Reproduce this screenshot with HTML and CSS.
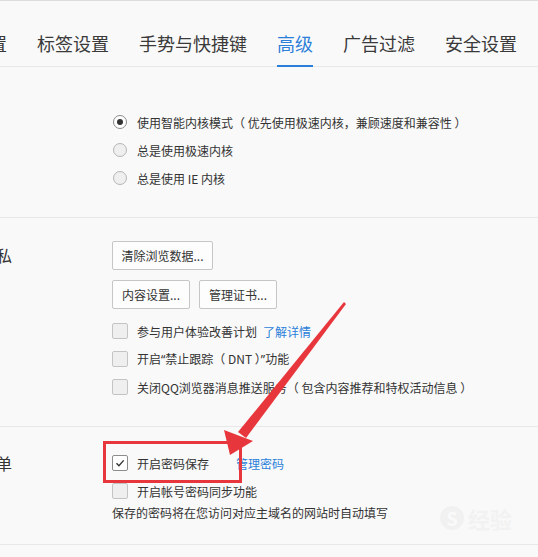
FILE: index.html
```html
<!DOCTYPE html>
<html lang="zh-CN">
<head>
<meta charset="utf-8">
<title>高级设置</title>
<link rel="stylesheet" href="styles.css">
</head>
<body>
<div class="page">
  <nav class="tabs">
    <span class="tab tab-first">常规设置</span>
    <span class="tab">标签设置</span>
    <span class="tab">手势与快捷键</span>
    <span class="tab active">高级</span>
    <span class="tab">广告过滤</span>
    <span class="tab">安全设置</span>
  </nav>

  <section class="section s1">
    <div class="label"></div>
    <div class="content">
      <div class="row"><span class="radio checked"></span><span>使用智能内核模式（ 优先使用极速内核，兼顾速度和兼容性 ）</span></div>
      <div class="row"><span class="radio"></span><span>总是使用极速内核</span></div>
      <div class="row"><span class="radio"></span><span>总是使用 IE 内核</span></div>
    </div>
  </section>

  <section class="section s2">
    <div class="label">隐私</div>
    <div class="content">
      <div class="btn-row"><button class="btn btn-wide">清除浏览数据...</button></div>
      <div class="btn-row gap"><button class="btn btn-a">内容设置...</button><button class="btn btn-b">管理证书...</button></div>
      <div class="checks">
        <div class="row"><span class="check"></span><span>参与用户体验改善计划</span><a class="link link-a">了解详情</a></div>
        <div class="row"><span class="check"></span><span>开启<span class="q">“</span>禁止跟踪（ DNT ）<span class="q">”</span>功能</span></div>
        <div class="row"><span class="check"></span><span>关闭QQ浏览器消息推送服务（ 包含内容推荐和特权活动信息 ）</span></div>
      </div>
    </div>
  </section>

  <section class="section s3">
    <div class="label label3">表单</div>
    <div class="content">
      <div class="row"><span class="check on"><svg viewBox="0 0 16 16" width="16" height="16"><path d="M4 8.2 L6.8 11 L12.2 5" fill="none" stroke="#333" stroke-width="1.6"/></svg></span><span>开启密码保存</span><a class="link link-b">管理密码</a></div>
      <div class="row"><span class="check"></span><span>开启帐号密码同步功能</span></div>
      <div class="note">保存的密码将在您访问对应主域名的网站时自动填写</div>
    </div>
  </section>

  <div class="watermark"><span class="wm-s">S</span><span class="wm-t">经验</span></div>

  <svg class="annot" width="538" height="557" viewBox="0 0 538 557">
    <rect x="104.5" y="442.5" width="136" height="39" fill="none" stroke="#e8373c" stroke-width="3"/>
    <polygon points="344,302 346,304 246,438 238,432" fill="#e8373c"/>
    <polygon points="230,455 224,430 253,441" fill="#e8373c"/>
  </svg>
</div>
</body>
</html>
```
FILE: styles.css
```css
* { box-sizing: border-box; }
html, body { margin: 0; padding: 0; }
body {
  background: #f9f9f9;
  font-family: "Noto Sans CJK SC", "Noto Sans", sans-serif;
  color: #333;
  overflow: hidden;
  width: 538px;
  height: 557px;
}
.page {
  position: relative;
  border-top: 1px solid #dedede;
  height: 557px;
  overflow: hidden;
}
.tabs {
  display: flex;
  align-items: flex-end;
  gap: 30px;
  height: 66px;
  border-bottom: 1px solid #e8e8e8;
  white-space: nowrap;
}
.tab {
  font-size: 18px;
  line-height: 24px;
  color: #3a3a3a;
  padding-bottom: 10px;
  border-bottom: 2px solid transparent;
  margin-bottom: -1px;
}
.tab-first { margin-left: -65px; }
.tab.active {
  color: #2b7fd9;
  border-bottom-color: #2b7fd9;
}
.section {
  display: flex;
  border-bottom: 1px solid #e8e8e8;
}
.label {
  width: 132px;
  margin-left: -20px;
  flex: none;
  font-size: 16px;
  line-height: 29px;
  color: #333;
}
.content {
  display: flex;
  flex-direction: column;
  font-size: 12px;
  color: #333;
}
.s1 { padding: 41px 0 25px; }
.s2 { padding: 23px 0 25px; }
.s3 { padding: 22px 0 23px; }
.label3 { line-height: 28px; }
.row {
  display: flex;
  align-items: center;
  height: 28px;
  white-space: nowrap;
}
.q { font-family: "Noto Sans", sans-serif; }
.radio {
  width: 14px;
  height: 14px;
  border-radius: 50%;
  border: 1px solid #b5b5b5;
  background: #efefef;
  margin-left: 1px;
  margin-right: 10px;
  flex: none;
  display: flex;
  align-items: center;
  justify-content: center;
}
.radio.checked { background: #fff; border-color: #8a8a8a; }
.radio.checked::after {
  content: "";
  width: 6px;
  height: 6px;
  border-radius: 50%;
  background: #333;
}
.check {
  width: 16px;
  height: 16px;
  border: 1px solid #c4c4c4;
  background: #efefef;
  border-radius: 2px;
  margin-right: 9px;
  flex: none;
  display: flex;
  align-items: center;
  justify-content: center;
}
.check.on { background: #fff; border-color: #8c8c8c; }
.check svg { display: block; }
.link { color: #2b7fd9; cursor: pointer; }
.link-a { margin-left: 6px; }
.link-b { margin-left: 27px; }
.btn-row { display: flex; gap: 9px; }
.btn-row.gap { margin-top: 10px; margin-bottom: 8px; }
.btn {
  font-family: inherit;
  font-size: 12px;
  color: #333;
  height: 29px;
  background: #fdfdfd;
  border: 1px solid #c6c6c6;
  border-radius: 2px;
  padding: 0;
}
.btn-wide { width: 101px; }
.btn-a { width: 78px; }
.btn-b { width: 78px; }
.note {
  font-size: 12px;
  line-height: 16px;
  white-space: nowrap;
}
.watermark {
  position: absolute;
  left: 440px;
  top: 501px;
  display: flex;
  align-items: center;
  gap: 4px;
  pointer-events: none;
}
.wm-s {
  width: 24px;
  height: 24px;
  border-radius: 50%;
  background: #f1f1f1;
  color: #fafafa;
  font-size: 18px;
  font-weight: bold;
  display: flex;
  align-items: center;
  justify-content: center;
}
.wm-t { font-size: 22px; font-weight: bold; color: #f2f2f2; }
.annot {
  position: absolute;
  left: 0;
  top: -1px;
  pointer-events: none;
}
```
